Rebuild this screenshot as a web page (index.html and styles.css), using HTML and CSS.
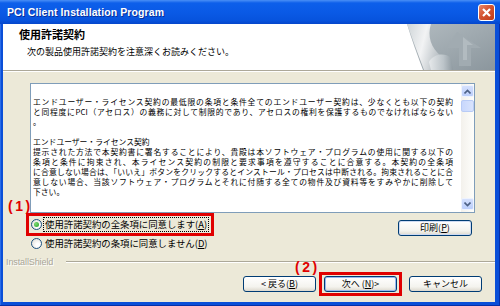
FILE: index.html
```html
<!DOCTYPE html>
<html>
<head>
    <meta charset="utf-8">
    <title>PCI Client Installation Program</title>
    <link rel="stylesheet" href="styles.css">
</head>
<body>
<div class="window">
    <div class="titlebar">
        <span class="title">PCI Client Installation Program</span>
        <span class="close">
            <svg width="15" height="15" viewBox="0 0 15 15"><path d="M4 4 L11 11 M11 4 L4 11" stroke="#fff" stroke-width="2.2"/></svg>
        </span>
    </div>

    <div class="client">
        <div class="header">
            <div class="head-text">
                <div class="head-title">使用許諾契約</div>
                <div class="head-sub">次の製品使用許諾契約を注意深くお読みください。</div>
            </div>
            <svg class="curl" width="88" height="46" viewBox="0 0 88 46">
                <defs>
                    <linearGradient id="bg" x1="0" y1="0" x2="1" y2="1">
                        <stop offset="0" stop-color="#b3bcc1"/>
                        <stop offset="1" stop-color="#8b969d"/>
                    </linearGradient>
                    <linearGradient id="page" x1="0" y1="0" x2="1" y2="0.3">
                        <stop offset="0" stop-color="#cfd5d8"/>
                        <stop offset="0.5" stop-color="#f2f3f4"/>
                        <stop offset="1" stop-color="#b3bbc0"/>
                    </linearGradient>
                    <linearGradient id="roll" x1="0" y1="0" x2="1" y2="0">
                        <stop offset="0" stop-color="#e6e9eb"/>
                        <stop offset="0.6" stop-color="#bcc4c9"/>
                        <stop offset="1" stop-color="#8f9aa1"/>
                    </linearGradient>
                </defs>
                <path d="M0 0 H88 V46 H16 C10 30 4 14 0 0 Z" fill="url(#bg)"/>
                <path d="M50 8 L74 24 L64 24 L64 42 L52 42 L52 24 L40 24 Z" fill="#a1abb1"/>
                <path d="M56 13 L66 21 L60 21 L60 36 L56 36 Z" fill="#b2bbc0"/>
                <path d="M0 0 H24 C20 12 24 24 34 32 L38 46 H17 C11 30 5 14 0 0 Z" fill="url(#page)"/>
                <path d="M22 38 C26 30 38 28 44 34 L46 46 H24 Z" fill="url(#roll)"/>
            </svg>
        </div>

        <div class="content">
            <div class="licence">
                <div class="licence-text">
                    <div class="line full">エンドユーザー・ライセンス契約の最低限の条項と条件全てのエンドユーザー契約は、少なくとも以下の契約</div>
                    <div class="line full">と同程度にPCI（アセロス）の義務に対して制限的であり、アセロスの権利を保護するものでなければならない</div>
                    <div class="line">。</div>
                    <div class="line">&nbsp;</div>
                    <div class="line">エンドユーザー・ライセンス契約</div>
                    <div class="line full">提示された方法で本契約書に署名することにより、貴殿は本ソフトウェア・プログラムの使用に関する以下の</div>
                    <div class="line full">条項と条件に拘束され、本ライセンス契約の制限と要求事項を遵守することに合意する。本契約の全条項</div>
                    <div class="line full">に合意しない場合は、「いいえ」ボタンをクリックするとインストール・プロセスは中断される。拘束されることに合</div>
                    <div class="line full">意しない場合、当該ソフトウェア・プログラムとそれに付随する全ての物件及び資料等をすみやかに削除して</div>
                    <div class="line">下さい。</div>
                </div>
                <div class="scrollbar">
                    <div class="sb-btn">
                        <svg width="7" height="5" viewBox="0 0 7 5"><path d="M0.5 4.5 L3.5 1.5 L6.5 4.5" fill="none" stroke="#4d6185" stroke-width="1.6"/></svg>
                    </div>
                    <div class="sb-thumb"></div>
                    <div class="sb-track"></div>
                    <div class="sb-btn">
                        <svg width="7" height="5" viewBox="0 0 7 5"><path d="M0.5 0.5 L3.5 3.5 L6.5 0.5" fill="none" stroke="#4d6185" stroke-width="1.6"/></svg>
                    </div>
                </div>
            </div>

            <div class="options">
                <div class="choices">
                    <div class="mark mark-1">
                        <span class="note">(1)</span>
                        <div class="choice">
                            <span class="radio checked"></span>
                            <span class="label focused">使用許諾契約の全条項に同意します(<u>A</u>)</span>
                        </div>
                    </div>
                    <div class="choice second">
                        <span class="radio"></span>
                        <span class="label">使用許諾契約の条項に同意しません(<u>D</u>)</span>
                    </div>
                </div>
                <button class="btn print">印刷(<u>P</u>)</button>
            </div>
        </div>

        <div class="brand">
            <span class="brand-name">InstallShield</span>
            <span class="rule"></span>
        </div>

        <div class="buttons">
            <button class="btn">&lt; 戻る(<u>B</u>)</button>
            <div class="mark mark-2">
                <span class="note">(2)</span>
                <button class="btn default">次へ (<u>N</u>)&gt;</button>
            </div>
            <button class="btn cancel">キャンセル</button>
        </div>
    </div>
</div>
</body>
</html>
```

FILE: styles.css
```css
:root {
    --face: #ece9d8;
    --xp-blue: #0a4fd8;
    --etch: #aca899;
    --mark: #e00000;
}

body {
    margin: 0;
    font-family: "Noto Sans CJK JP", sans-serif;
}

.window {
    width: 500px;
    height: 306px;
    background: var(--xp-blue);
    box-shadow: inset -1px -1px 0 #0730a8, inset 1px 0 0 #2a6ce8;
    display: flex;
    flex-direction: column;
}

.titlebar {
    height: 24px;
    flex: none;
    display: flex;
    align-items: center;
    justify-content: space-between;
    padding: 0 5px 0 7px;
    background: linear-gradient(#4a8ff6 0, #0d5fea 3px, #0a5ae6 50%, #0753dd 85%, #0546cb 100%);
}

.title {
    color: #fff;
    font-family: "Liberation Sans", sans-serif;
    font-weight: bold;
    font-size: 10.5px;
    letter-spacing: 0.1px;
    text-shadow: 1px 1px 0 #0a2f9a;
}

.close {
    width: 15px;
    height: 15px;
    border: 1px solid #fff;
    border-radius: 3px;
    background: linear-gradient(135deg, #e9876a, #d45532 45%, #c03b18);
    display: flex;
}

.client {
    flex: 1;
    margin: 0 5px 4px 3px;
    background: var(--face);
    display: flex;
    flex-direction: column;
}

.header {
    height: 46px;
    background: #fff;
    display: flex;
    justify-content: space-between;
    border-bottom: 1px solid var(--etch);
    box-shadow: 0 1px 0 #fff;
}

.head-text {
    padding: 4px 0 0 16px;
}

.head-title {
    font-size: 11px;
    font-weight: bold;
    line-height: 12px;
}

.head-sub {
    font-size: 9px;
    line-height: 12px;
    margin: 6px 0 0 8px;
}

.content {
    padding: 12px 20px 0 27px;
}

.licence {
    height: 128px;
    border: 1px solid #7f9db9;
    background: #fff;
    display: flex;
}

.licence-text {
    flex: 1;
    padding: 13px 0 0 2px;
    font-size: 7.8px;
    line-height: 10px;
}

.line {
    white-space: nowrap;
}

.line.full {
    width: 420px;
    white-space: normal;
    text-align: justify;
    text-align-last: justify;
}

.scrollbar {
    width: 13px;
    padding: 1px 0 2px;
    display: flex;
    flex-direction: column;
    background: linear-gradient(90deg, #f3f1ec, #fefefb);
}

.sb-btn {
    height: 12px;
    background: linear-gradient(#d4e0fd, #bccffb);
    border: 1px solid #eef3fe;
    border-radius: 2px;
    box-sizing: border-box;
    display: flex;
    align-items: center;
    justify-content: center;
}

.sb-thumb {
    height: 12px;
    margin-top: 3px;
    background: linear-gradient(90deg, #c8d7fc, #d8e3fd);
    border: 1px solid #b8cbf6;
    border-radius: 2px;
    box-sizing: border-box;
}

.sb-track {
    flex: 1;
}

.options {
    display: flex;
    justify-content: space-between;
    align-items: flex-start;
}

.choices {
    margin-left: -4px;
    display: flex;
    flex-direction: column;
    align-items: flex-start;
}

.mark {
    position: relative;
    border: 3px solid var(--mark);
}

.mark-1 {
    padding: 0 3px 0 2px;
}

.mark-2 {
    padding: 1px 2px;
    margin: 0 7px 0 3px;
    display: flex;
}

.note {
    position: absolute;
    color: var(--mark);
    font-family: "Liberation Sans", sans-serif;
    font-weight: bold;
    font-size: 14px;
    line-height: 14px;
    letter-spacing: 2.5px;
}

.mark-1 .note {
    left: -21px;
    top: -17px;
}

.mark-2 .note {
    left: -27px;
    top: -15px;
}

.choice {
    height: 17px;
    display: flex;
    align-items: center;
    font-size: 9.4px;
}

.choice.second {
    height: 14px;
    margin-left: 5px;
}

.radio {
    width: 11px;
    height: 11px;
    box-sizing: border-box;
    border: 1px solid #1c5180;
    border-radius: 50%;
    background: radial-gradient(circle at 65% 65%, #fff 20%, #dcdad1 100%);
    margin-right: 2px;
    display: flex;
    align-items: center;
    justify-content: center;
}

.radio.checked::after {
    content: "";
    width: 5px;
    height: 5px;
    border-radius: 50%;
    background: radial-gradient(circle at 35% 35%, #7fd874, #21a121);
}

.label {
    line-height: 13px;
    padding: 0 1px;
}

.label.focused {
    outline: 1px dotted #000;
}

.btn {
    width: 73px;
    height: 16px;
    padding: 0;
    border: 1px solid #003c74;
    border-radius: 3px;
    background: linear-gradient(#ffffff, #f4f3ee 70%, #dcd8cd);
    font-family: "Noto Sans CJK JP", sans-serif;
    font-size: 9px;
    line-height: 14px;
    color: #000;
}

.btn.print {
    width: 74px;
    margin: 7px 3px 0 0;
    box-shadow: inset 0 0 0 1px #cddaf2;
}

.btn.default {
    box-shadow: inset 0 0 0 1px #98b8f0;
}

.brand {
    height: 12px;
    margin-top: 6px;
    padding-left: 3px;
    display: flex;
    align-items: center;
}

.brand-name {
    font-family: "Liberation Sans", sans-serif;
    font-size: 9px;
    letter-spacing: -0.1px;
    color: #a9a698;
    text-shadow: 1px 1px 0 #fff;
}

.rule {
    flex: 1;
    margin-left: 13px;
    border-top: 1px solid var(--etch);
    border-bottom: 1px solid #fff;
}

.buttons {
    margin-top: 4px;
    padding-right: 13px;
    display: flex;
    justify-content: flex-end;
    align-items: center;
}
```
